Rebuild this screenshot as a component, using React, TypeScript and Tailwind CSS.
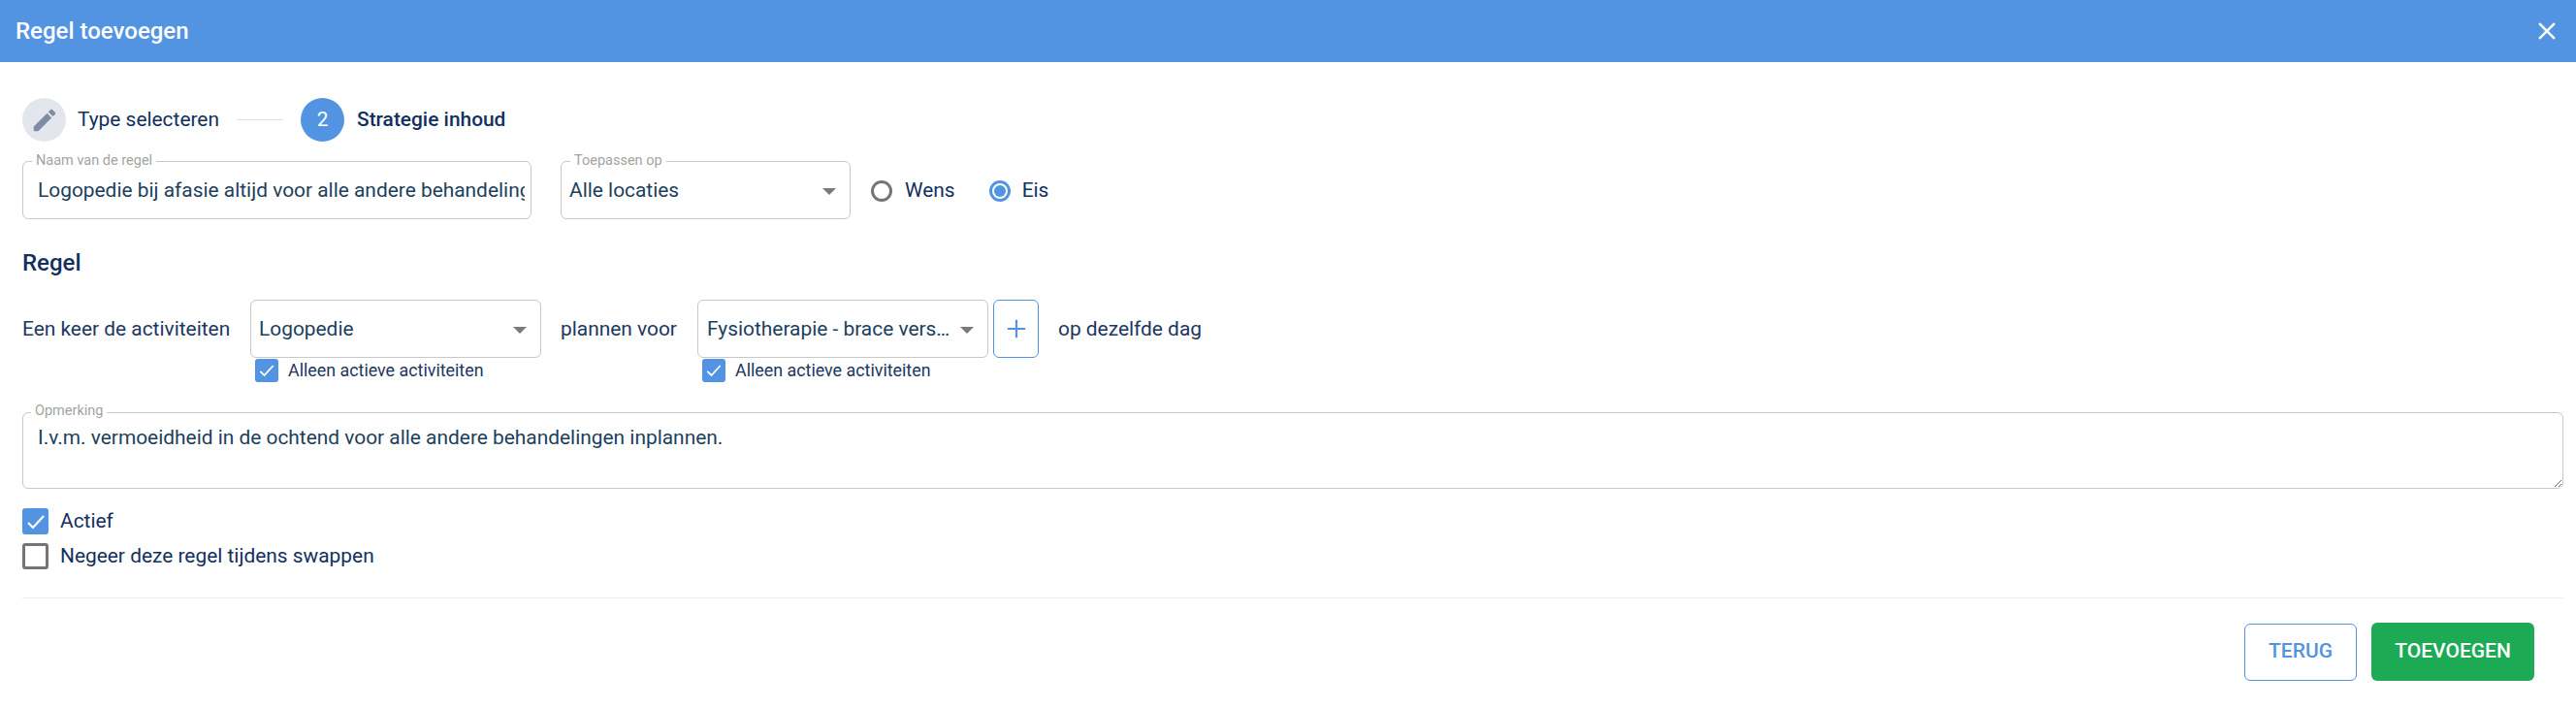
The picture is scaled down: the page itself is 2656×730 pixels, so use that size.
import type { ReactNode } from 'react';

function CheckIcon() {
  return (
    <svg viewBox="0 0 24 24" className="w-[20px] h-[20px]" fill="none" stroke="white" strokeWidth="2.2">
      <path d="M4 13l5 5L20 6" />
    </svg>
  );
}

function Outlined({ label, width, children }: { label?: string; width: string; children: ReactNode }) {
  return (
    <div className={`relative h-[60px] shrink-0 rounded-[6px] border border-[#c8c8c8] bg-white ${width}`}>
      {label && (
        <span className="absolute left-[9px] top-[-9px] bg-white px-[4px] text-[14.5px] leading-[16px] text-[#a3a3a3]">
          {label}
        </span>
      )}
      {children}
    </div>
  );
}

function SelectBox({ label, value, width, textClass = 'pl-[8px]' }: { label?: string; value: string; width: string; textClass?: string }) {
  return (
    <Outlined label={label} width={width}>
      <div className={`flex h-full items-center justify-between pr-[14px] pt-[2px] ${textClass}`}>
        <span className="truncate text-[20.9px] text-[#1c3f5e]">{value}</span>
        <span className="ml-[8px] h-0 w-0 shrink-0 border-x-[7px] border-t-[7px] border-x-transparent border-t-[#7a7a7a]" />
      </div>
    </Outlined>
  );
}

function ActiveCheck() {
  return (
    <div className="mt-px flex h-[24px] items-center pl-[5px]">
      <span className="flex h-[24px] w-[24px] items-center justify-center rounded-[3px] bg-[#5294e2]">
        <CheckIcon />
      </span>
      <span className="ml-[10px] text-[17.85px] text-[#1c3760]">Alleen actieve activiteiten</span>
    </div>
  );
}

export default function App() {
  return (
    <div className="min-h-[730px] bg-white font-['Roboto',sans-serif] text-[20.9px] text-[#12305f]">
      <header className="flex h-[64px] items-center justify-between bg-[#5294e2] pl-[16px] pr-[15px] text-white">
        <h1 className="text-[24px] font-medium">Regel toevoegen</h1>
        <svg viewBox="0 0 24 24" className="h-[30px] w-[30px]" fill="currentColor">
          <path d="M19 6.41 17.59 5 12 10.59 6.41 5 5 6.41 10.59 12 5 17.59 6.41 19 12 13.41 17.59 19 19 17.59 13.41 12z" />
        </svg>
      </header>

      <div className="pl-[23px] pr-[13px]">
        <div className="mt-[37px] flex h-[45px] items-center">
          <span className="flex h-[45px] w-[45px] items-center justify-center rounded-full bg-[#e3e6ec]">
            <svg viewBox="0 0 24 24" className="h-[30px] w-[30px]" fill="#7f8ca3">
              <path d="M3 17.25V21h3.75L17.81 9.94l-3.75-3.75L3 17.25zM20.71 7.04c.39-.39.39-1.02 0-1.41l-2.34-2.34c-.39-.39-1.02-.39-1.41 0l-1.83 1.83 3.75 3.75 1.83-1.83z" />
            </svg>
          </span>
          <span className="ml-[12px] w-[145px] whitespace-nowrap">Type selecteren</span>
          <span className="ml-[19px] h-px w-[48px] bg-[#dcdfe4]" />
          <span className="ml-[18px] flex h-[45px] w-[45px] items-center justify-center rounded-full bg-[#5294e2] text-white">2</span>
          <span className="ml-[13px] whitespace-nowrap font-medium">Strategie inhoud</span>
        </div>

        <div className="mt-[20px] flex items-center">
          <Outlined label="Naam van de regel" width="w-[525px]">
            <input
              readOnly
              value="Logopedie bij afasie altijd voor alle andere behandelingen"
              className="h-full w-full bg-transparent pl-[15px] pr-[6px] text-[20.9px] text-[#1c3f5e] outline-none"
            />
          </Outlined>
          <div className="ml-[30px]">
            <SelectBox label="Toepassen op" value="Alle locaties" width="w-[299px]" />
          </div>
          <span className="ml-[21px] mt-px h-[22px] w-[22px] rounded-full border-[3px] border-[#757575]" />
          <span className="ml-[13px] mt-[2px]">Wens</span>
          <span className="ml-[35px] mt-px flex h-[22px] w-[22px] items-center justify-center rounded-full border-[3px] border-[#5294e2]">
            <span className="h-[12px] w-[12px] rounded-full bg-[#5294e2]" />
          </span>
          <span className="ml-[12px] mt-[2px]">Eis</span>
        </div>

        <h2 className="mt-[30px] h-[30px] text-[24px] font-medium leading-[30px]">Regel</h2>

        <div className="mt-[23px] flex items-start">
          <span className="flex h-[60px] w-[235px] items-center whitespace-nowrap pt-[2px] text-[#1c3760]">Een keer de activiteiten</span>
          <div className="flex flex-col">
            <SelectBox value="Logopedie" width="w-[300px]" />
            <ActiveCheck />
          </div>
          <span className="ml-[20px] flex h-[60px] w-[141px] items-center whitespace-nowrap pt-[2px] text-[#1c3760]">plannen voor</span>
          <div className="flex flex-col">
            <SelectBox value="Fysiotherapie - brace verstrekken" width="w-[300px]" textClass="pl-[9px]" />
            <ActiveCheck />
          </div>
          <button className="ml-[5px] flex h-[60px] w-[47px] items-center justify-center rounded-[6px] border border-[#5294e2] text-[#5294e2]">
            <svg viewBox="0 0 24 24" className="h-[22px] w-[22px]" fill="none" stroke="currentColor" strokeWidth="2.4">
              <path d="M12 2v20M2 12h20" />
            </svg>
          </button>
          <span className="ml-[20px] flex h-[60px] items-center whitespace-nowrap pt-[2px] text-[#1c3760]">op dezelfde dag</span>
        </div>

        <div className="relative mt-[31px]">
          <span className="absolute left-[9px] top-[-9px] z-10 bg-white px-[4px] text-[14.5px] leading-[16px] text-[#a3a3a3]">Opmerking</span>
          <textarea
            readOnly
            value="I.v.m. vermoeidheid in de ochtend voor alle andere behandelingen inplannen."
            className="block h-[79px] w-full rounded-[6px] border border-[#c8c8c8] pl-[15px] pt-[12px] text-[20.9px] leading-[26px] text-[#1c3f5e] outline-none"
          />
        </div>

        <div className="mt-[20px] flex h-[27px] items-center">
          <span className="flex h-[27px] w-[27px] items-center justify-center rounded-[3px] bg-[#5294e2]">
            <svg viewBox="0 0 24 24" className="h-[24px] w-[24px]" fill="none" stroke="white" strokeWidth="2.2">
              <path d="M4 13l5 5L20 6" />
            </svg>
          </span>
          <span className="ml-[12px]">Actief</span>
        </div>
        <div className="mt-[9px] flex h-[27px] items-center">
          <span className="h-[27px] w-[27px] rounded-[3px] border-[3px] border-[#757575]" />
          <span className="ml-[12px]">Negeer deze regel tijdens swappen</span>
        </div>

        <div className="mt-[29px] h-px bg-[#eeeeee]" />

        <div className="mt-[25px] flex items-center justify-end pr-[30px]">
          <button className="h-[59px] w-[116px] rounded-[6px] border border-[#5294e2] text-[21px] font-medium text-[#5294e2]">TERUG</button>
          <button className="ml-[15px] h-[60px] w-[168px] rounded-[6px] bg-[#1daa55] text-[21px] font-medium text-white">TOEVOEGEN</button>
        </div>
      </div>
    </div>
  );
}
